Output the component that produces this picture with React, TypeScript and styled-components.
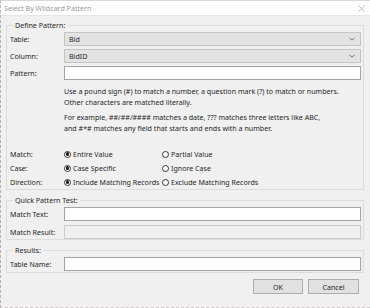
import React from 'react'
import styled, { createGlobalStyle } from 'styled-components'

const GlobalStyle = createGlobalStyle`
  html, body {
    margin: 0;
    padding: 0;
    background: #f0f0f0;
  }
  * { box-sizing: border-box; }
`

const Window = styled.div`
  width: 370px;
  height: 308px;
  display: flex;
  flex-direction: column;
  background: #f0f0f0;
  border-left: 1px dashed #b4b4b4;
  border-bottom: 1px dashed #d6c4ca;
  font-family: 'Noto Sans', 'Open Sans', sans-serif;
  font-size: 7.1px;
  color: #262626;
  overflow: hidden;
`

const TitleBar = styled.div`
  height: 16px;
  flex: none;
  display: flex;
  align-items: center;
  justify-content: space-between;
  padding: 0 5px 0 3px;
  background: #fff;
  border-top: 1px solid #d8d8d8;
  border-bottom: 1px solid #e6e6e6;
`

const Title = styled.span`
  color: #9a9a9a;
`

const Close = () => (
  <svg width="7" height="7" viewBox="0 0 7 7">
    <path d="M0.5 0.5L6.5 6.5M6.5 0.5L0.5 6.5" stroke="#a8a8a8" strokeWidth="0.8" fill="none" />
  </svg>
)

const Body = styled.div`
  flex: 1;
  display: flex;
  flex-direction: column;
  padding: 4px 6px 0 5px;
`

const Group = styled.fieldset<{ $gap?: number; $top?: number; $bottom?: number }>`
  margin: ${({ $top }) => $top ?? 0}px 0 0 0;
  padding: 2px 2px ${({ $bottom }) => $bottom ?? 0}px 3px;
  border: 1px solid #dcdcdc;
  min-width: 0;
  display: flex;
  flex-direction: column;
  gap: ${({ $gap }) => $gap ?? 3}px;
`

const Legend = styled.legend`
  margin-left: 3px;
  padding: 0 2px;
  line-height: 10px;
  color: #262626;
`

const Row = styled.div`
  display: grid;
  grid-template-columns: 54px 1fr;
  align-items: center;
  height: 14px;
`

const Label = styled.span`
  white-space: nowrap;
`

const SelectBox = styled.div`
  height: 14px;
  display: flex;
  align-items: center;
  justify-content: space-between;
  padding: 0 5px 0 4px;
  background: #e3e3e3;
  border: 1px solid #c4c4c4;
`

const Input = styled.div<{ $disabled?: boolean }>`
  height: 14px;
  background: ${({ $disabled }) => ($disabled ? '#f0f0f0' : '#fff')};
  border: 1px solid ${({ $disabled }) => ($disabled ? '#cacaca' : '#a4a4a4')};
`

const Help = styled.div`
  margin: 3px 0 0 54px;
  line-height: 11px;
  display: flex;
  flex-direction: column;
  gap: 4px;
  p { margin: 0; }
`

const Options = styled.div`
  margin-top: 10px;
  display: flex;
  flex-direction: column;
`

const OptionRow = styled.div`
  display: grid;
  grid-template-columns: 54px 98px 1fr;
  align-items: center;
  height: 14px;
`

const Radio = styled.label`
  display: flex;
  align-items: center;
  gap: 2px;
  white-space: nowrap;
`

const Dot = styled.span<{ $on?: boolean }>`
  width: 7px;
  height: 7px;
  flex: none;
  border-radius: 50%;
  border: 0.8px solid #333;
  background: #fff;
  display: flex;
  align-items: center;
  justify-content: center;
  &::after {
    content: '';
    width: 3.4px;
    height: 3.4px;
    border-radius: 50%;
    background: ${({ $on }) => ($on ? '#1a1a1a' : 'transparent')};
  }
`

const Buttons = styled.div`
  margin-top: 6px;
  display: flex;
  justify-content: flex-end;
  gap: 5px;
  padding-right: 5px;
`

const Button = styled.button<{ $w: number }>`
  width: ${({ $w }) => $w}px;
  height: 15px;
  padding: 0;
  background: #e1e1e1;
  border: 1px solid #adadad;
  font-family: inherit;
  font-size: 7.1px;
  color: #262626;
`

const Chevron = () => (
  <svg width="6" height="4" viewBox="0 0 6 4">
    <path d="M0.5 0.8L3 3.2L5.5 0.8" stroke="#555" strokeWidth="0.8" fill="none" />
  </svg>
)

const options = [
  { label: 'Match:', a: 'Entire Value', b: 'Partial Value' },
  { label: 'Case:', a: 'Case Specific', b: 'Ignore Case' },
  { label: 'Direction:', a: 'Include Matching Records', b: 'Exclude Matching Records' },
]

export default function App() {
  return (
    <>
      <GlobalStyle />
      <Window>
        <TitleBar>
          <Title>Select By Wildcard Pattern</Title>
          <Close />
        </TitleBar>
        <Body>
          <Group>
            <Legend>Define Pattern:</Legend>
            <Row>
              <Label>Table:</Label>
              <SelectBox>Bid<Chevron /></SelectBox>
            </Row>
            <Row>
              <Label>Column:</Label>
              <SelectBox>BidID<Chevron /></SelectBox>
            </Row>
            <Row>
              <Label>Pattern:</Label>
              <Input />
            </Row>
            <Help>
              <p>
                Use a pound sign (#) to match a number, a question mark (?) to match or numbers.
                <br />
                Other characters are matched literally.
              </p>
              <p>
                For example, ##/##/#### matches a date, ??? matches three letters like ABC,
                <br />
                and #*# matches any field that starts and ends with a number.
              </p>
            </Help>
            <Options>
              {options.map((o) => (
                <OptionRow key={o.label}>
                  <Label>{o.label}</Label>
                  <Radio><Dot $on />{o.a}</Radio>
                  <Radio><Dot />{o.b}</Radio>
                </OptionRow>
              ))}
            </Options>
          </Group>
          <Group $top={5} $gap={4}>
            <Legend>Quick Pattern Test:</Legend>
            <Row>
              <Label>Match Text:</Label>
              <Input />
            </Row>
            <Row>
              <Label>Match Result:</Label>
              <Input $disabled />
            </Row>
          </Group>
          <Group $top={5} $bottom={1}>
            <Legend>Results:</Legend>
            <Row>
              <Label>Table Name:</Label>
              <Input />
            </Row>
          </Group>
          <Buttons>
            <Button $w={50}>OK</Button>
            <Button $w={51}>Cancel</Button>
          </Buttons>
        </Body>
      </Window>
    </>
  )
}
